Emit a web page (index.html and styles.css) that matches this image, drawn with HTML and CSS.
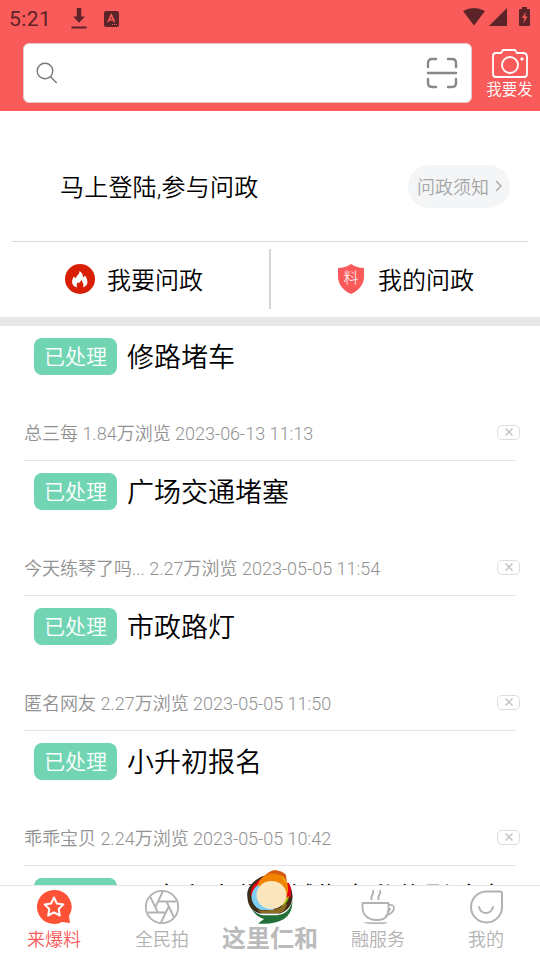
FILE: index.html
```html
<!DOCTYPE html>
<html lang="zh-CN">
<head>
<meta charset="utf-8">
<title>问政</title>
<link rel="stylesheet" href="styles.css">
</head>
<body>
<div class="app">
  <header class="header">
    <div class="status">
      <span class="clock">5:21</span>
      <svg class="download" width="16" height="22" viewBox="0 0 16 22"><path d="M5.800 0h4.400v8.500H14L8 14.800 2 8.500h3.800zM.500 18.500h15v2H.500z" fill="#5c2328"/></svg>
      <svg class="app-icon" width="15" height="16" viewBox="0 0 15 16"><rect width="15" height="16" rx="2" fill="#5c2328"/><path d="M4 11 7.300 3.800 10.600 11M5.200 8.700h4.200" fill="none" stroke="#f95a5a" stroke-width="1.600"/><path d="M8 13.500h1m1 0h1m1 0h1" stroke="#f95a5a"/></svg>
      <svg class="signals" width="68" height="20" viewBox="0 0 68 20"><path d="M0 4Q11-2 22 4L11 18.500zM44 1v18H26z" fill="#5c2328"/><path d="M59 0h5v2h2q1 0 1 1v15q0 1-1 1h-9q-1 0-1-1V3q0-1 1-1h2z" fill="#5c2328"/><path d="M63 4.500 59 11h2.500l-1 5.500 4-7H62z" fill="#f95a5a"/></svg>
    </div>
    <div class="search-row">
      <div class="search">
        <svg width="22" height="22" viewBox="0 0 22 22" fill="none" stroke="#777" stroke-width="1.400"><circle cx="9" cy="9" r="7.800"/><path d="m14.500 14.800 6.200 6.200"/></svg>
        <svg width="32" height="32" viewBox="0 0 32 32" fill="none" stroke="#888" stroke-width="2.400" stroke-linecap="round"><path d="M2 10V6q0-4 4-4h4M22 2h4q4 0 4 4v4M2 22v4q0 4 4 4h4M22 30h4q4 0 4-4v-4M2 16h28"/></svg>
      </div>
      <div class="post">
        <svg width="36" height="30" viewBox="0 0 36 30" fill="none" stroke="#fff" stroke-width="1.800"><path d="M4 4h5l2-3h12l2 3h6q4 0 4 4v17q0 3-3 3H4q-3 0-3-3V7q0-3 3-3z"/><circle cx="18" cy="16" r="8"/><circle cx="30" cy="10" r="1.200" fill="#fff" stroke-width="1"/></svg>
        <span>我要发</span>
      </div>
    </div>
  </header>
  <section class="welcome">
    <span class="login">马上登陆,参与问政</span>
    <span class="notice">问政须知<svg width="7" height="12" viewBox="0 0 7 12" fill="none" stroke="#aaa" stroke-width="1.500"><path d="m1 1 5 5-5 5"/></svg></span>
  </section>
  <section class="actions">
    <div class="action ask">
      <svg width="30" height="30" viewBox="0 0 30 30"><circle cx="15" cy="15" r="15" fill="#d91e06"/><path d="M12 23.500C5 21.500 7 15 9 12.500l1.500 2C12 11 14.500 10.500 14.500 7c4 3 3 5 4 6.500l1.500-2c3.500 5 3.500 10-2 12 1.500-4-1-5-1.500-8-1 3-2 2-2.500 4l-1-1.500c-1.500 2-1.500 3-1 5.500z" fill="#fff"/></svg>
      <span>我要问政</span>
    </div>
    <div class="action mine">
      <svg width="28" height="30" viewBox="0 0 28 30"><path d="M14 0q6 4 13 4v8q0 12-13 18Q1 24 1 12V4q7 0 13-4z" fill="#fa5a5a"/><text x="14" y="19" text-anchor="middle" class="shield-text">料</text></svg>
      <span>我的问政</span>
    </div>
  </section>
  <main class="list">
    <article class="item"><div class="title"><b class="badge">已处理</b><h2>修路堵车</h2></div><div class="meta"><span>总三每 1.84万浏览 2023-06-13 11:13</span><i class="dismiss"><svg width="8" height="8" viewBox="0 0 8 8"><path d="m.500.500 7 7m0-7-7 7" stroke="#c4c4c4" stroke-width="1.500"/></svg></i></div></article>
    <article class="item"><div class="title"><b class="badge">已处理</b><h2>广场交通堵塞</h2></div><div class="meta"><span>今天练琴了吗... 2.27万浏览 2023-05-05 11:54</span><i class="dismiss"><svg width="8" height="8" viewBox="0 0 8 8"><path d="m.500.500 7 7m0-7-7 7" stroke="#c4c4c4" stroke-width="1.500"/></svg></i></div></article>
    <article class="item"><div class="title"><b class="badge">已处理</b><h2>市政路灯</h2></div><div class="meta"><span>匿名网友 2.27万浏览 2023-05-05 11:50</span><i class="dismiss"><svg width="8" height="8" viewBox="0 0 8 8"><path d="m.500.500 7 7m0-7-7 7" stroke="#c4c4c4" stroke-width="1.500"/></svg></i></div></article>
    <article class="item"><div class="title"><b class="badge">已处理</b><h2>小升初报名</h2></div><div class="meta"><span>乖乖宝贝 2.24万浏览 2023-05-05 10:42</span><i class="dismiss"><svg width="8" height="8" viewBox="0 0 8 8"><path d="m.500.500 7 7m0-7-7 7" stroke="#c4c4c4" stroke-width="1.500"/></svg></i></div></article>
    <article class="item"><div class="title"><b class="badge">已处理</b><h2>一市和小作门城街市私信影响大</h2></div></article>
  </main>
  <nav class="tabs">
    <div class="tab active"><svg width="36" height="36" viewBox="0 0 36 36"><path d="M18 1a17 17 0 1 0 8 32l8 1-1-7A17 17 0 0 0 18 1z" fill="#ff5136"/><path d="m18 8.500 2.900 6 6.500.900-4.700 4.600 1.100 6.500-5.800-3.100-5.800 3.100 1.100-6.500-4.700-4.600 6.500-.900z" fill="none" stroke="#fff" stroke-width="2" stroke-linejoin="round"/></svg><span>来爆料</span></div>
    <div class="tab"><svg width="36" height="36" viewBox="0 0 36 36" fill="none" stroke="#b2b2b2" stroke-width="1.800"><circle cx="18" cy="18" r="16.200"/><path d="M14.500 12.500H32M22.500 12.500l7.500 16M24.500 18 17 33.500M21.500 23.500H4M14 23.500 6 7.500M11.500 18l7.500-16"/></svg><span>全民拍</span></div>
    <div class="tab home"><svg width="48" height="56" viewBox="0 0 48 56"><path d="M17 7C4 13 0 21 1.500 29 2 39 9 46 24 46s23-9 22.500-19q0-6-3-11z" fill="#3d2c18"/><path d="M5 38q3 6 10 8h17Q43 45 46.500 32q0 12-8.500 18-10 6-26 4.500l6-4.500Q8 47 5 38z" fill="#207038"/><path d="M16 9Q3 17 5 27l39 2q3-7-1-15z" fill="#e60012"/><path d="M16 9Q24 1 29 1q8 1 11 5l1 8z" fill="#d55b12"/><path d="M11 18C15 0 39 0 42 18q1 8-5 14z" fill="#f08300"/><path d="M34 6q6 3 8 11-3-6-8-11z" fill="#f5c400"/><path d="m37 30 6-3q-1 7-7 11z" fill="#a8bf13"/><path d="M11 41q6 1 12 0 12 0 16-7l2 2q-3 8-8 8H15z" fill="#8c6b22"/><path d="M12 16Q5 21 5.500 29q1.500 9 9.500 12l13 0z" fill="#7ecef4"/><path d="M14 44.500h20l-3 1.800H17z" fill="#fff"/><ellipse cx="25.500" cy="26" rx="15" ry="14" fill="#fce6bd"/></svg><span>这里仁和</span></div>
    <div class="tab"><svg width="36" height="36" viewBox="0 0 36 36" fill="none" stroke="#b2b2b2" stroke-width="1.800"><path d="M2.500 14h26v6q0 11-11 11h-3q-12-2-12-13zM28 16q6-1 6 3 0 5-9 8M12 11c-3-4 3-5 1-10M19 11c-3-4 3-5 1-10M27 23q3-1 3-4"/><path d="M4 33.500h23l-3 1.200H9z" fill="#b2b2b2" stroke-width=".500"/></svg><span>融服务</span></div>
    <div class="tab"><svg width="36" height="36" viewBox="0 0 36 36" fill="none" stroke="#b2b2b2" stroke-width="2"><path d="M18 2.500h14q2 0 2 2V18A15.500 15.500 0 1 1 18 2.500z"/><path d="M11 18c2 8 12 8 14 0" stroke-linecap="round"/></svg><span>我的</span></div>
  </nav>
</div>
</body>
</html>
```
FILE: styles.css
```css
* { box-sizing: border-box; }
body { margin: 0; background: #fff; font-family: Roboto, "Noto Sans CJK SC", sans-serif; font-weight: 350; }
svg { display: block; flex: none; }
.app { width: 540px; height: 960px; display: flex; flex-direction: column; overflow: hidden; }
.header { height: 111px; background: #f95a5a; flex: none; }
.status { height: 43px; display: flex; align-items: flex-start; padding: 7px 9px 0 9px; color: #5c2328; }
.clock { font-size: 21px; font-weight: 400; line-height: 24px; width: 62px; letter-spacing: .4px; }
.download { margin-top: 1px; }
.app-icon { margin: 4px 0 0 17px; }
.signals { margin-left: auto; }
.search-row { display: flex; }
.search { width: 449px; height: 60px; margin-left: 23px; border-radius: 6px; background: #fff; border: 1px solid #e5caca; display: flex; justify-content: space-between; align-items: center; padding: 0 13px 0 12px; }
.post { width: 68px; padding: 6px 0 0 7px; display: flex; flex-direction: column; align-items: center; color: #fff; font-size: 15.500px; line-height: 22px; }
.welcome { height: 131px; flex: none; margin: 0 12px; padding: 20px 18px 0 48px; border-bottom: 1px solid #d8d8d8; display: flex; justify-content: space-between; align-items: center; }
.login { font-size: 24px; line-height: 34px; margin-top: 4px; letter-spacing: .2px; }
.notice { width: 102px; height: 43px; border-radius: 22px; background: #f3f5f7; color: #a6a6a6; font-size: 18px; display: flex; align-items: center; padding-left: 9px; gap: 6px; }
.actions { height: 84px; flex: none; display: flex; border-bottom: 9px solid #e7e7e7; padding-top: 7px; }
.action { width: 270px; height: 60px; display: flex; align-items: center; font-size: 24px; color: #000; }
.action span { margin-top: -1px; }
.ask { padding-left: 65px; gap: 12px; border-right: 1px solid #d4d4d4; }
.mine { padding-left: 66px; gap: 13px; border-left: 1px solid #d4d4d4; }
.shield-text { font-size: 15px; font-weight: 300; fill: #fff; }
.list { flex: 1; min-height: 0; overflow: hidden; }
.item { height: 135px; margin: 0 24px; border-bottom: 1px solid #e4e4e4; }
.title { height: 61px; display: flex; align-items: center; gap: 10px; padding-left: 10px; white-space: nowrap; }
.badge { width: 83px; height: 37px; border-radius: 8px; background: #71d5b4; color: #fff; font-size: 21px; font-weight: 350; line-height: 38px; text-align: center; }
h2 { margin: 3px 0 0; font-size: 27px; font-weight: 350; line-height: 40px; color: #000; }
.meta { height: 30px; margin: 30px -4px 0 0; display: flex; align-items: center; justify-content: space-between; font-size: 18px; color: #929292; }
.dismiss { width: 23px; height: 15px; border: 1px solid #ddd; border-radius: 5px; display: grid; place-items: center; }
.tabs { height: 75px; flex: none; display: flex; border-top: 1px solid #e4e4e4; background: #fff; }
.tab { width: 108px; display: flex; flex-direction: column; align-items: center; padding-top: 3px; color: #b2b2b2; font-size: 18px; line-height: 29px; }
.tab.active { color: #fa5a5a; }
.home { padding-top: 0; color: #bbb; font-size: 24px; font-weight: 700; line-height: 28px; }
.home svg { margin-top: -17px; }
```
